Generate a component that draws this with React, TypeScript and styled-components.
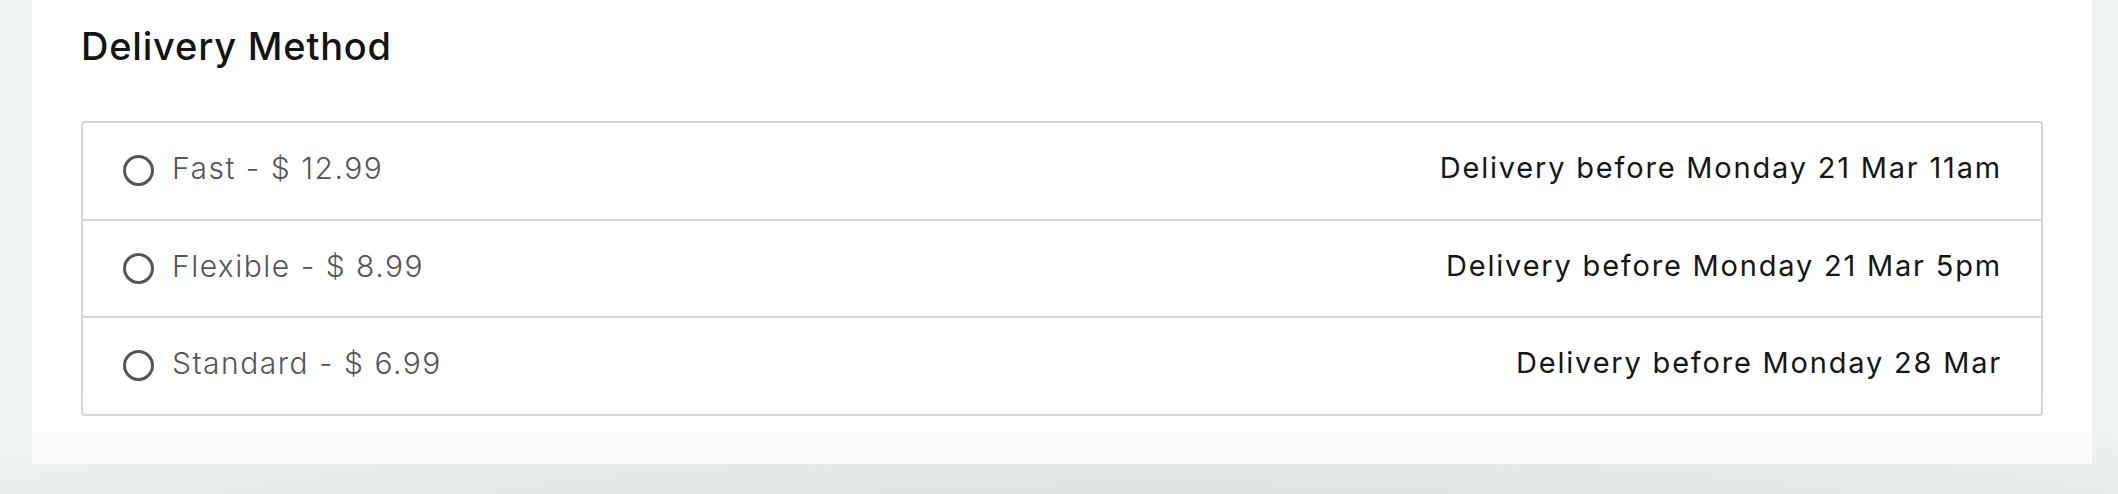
import React from "react";
import styled, { createGlobalStyle } from "styled-components";

const GlobalStyle = createGlobalStyle`
  html, body {
    margin: 0;
    padding: 0;
  }
  body {
    background: #eef2f3;
    font-family: "Inter", "Liberation Sans", sans-serif;
    min-height: 494px;
    overflow: hidden;
  }
`;

const Page = styled.div`
  width: 2118px;
  height: 494px;
  padding: 0 26px 0 32px;
  box-sizing: border-box;
  background: radial-gradient(ellipse 1400px 120px at 55% 520px, #d9dcdd 0%, #e5e8e9 50%, #eef2f3 100%);
`;

const Card = styled.section`
  background: linear-gradient(to bottom, #ffffff 82%, #fbfbfb 100%);
  border-radius: 0 0 4px 4px;
  padding: 26px 49px 48px 49px;
  box-sizing: border-box;
`;

const Heading = styled.h2`
  margin: 0 0 55px 0;
  font-family: "Inter", "Liberation Sans", sans-serif;
  font-weight: 500;
  font-size: 38px;
  letter-spacing: 0.8px;
  line-height: 40px;
  color: #141414;
`;

const OptionList = styled.div`
  border: 2px solid #d6d6d6;
  border-radius: 4px;
  display: flex;
  flex-direction: column;
`;

const OptionRow = styled.label`
  display: flex;
  align-items: center;
  justify-content: space-between;
  height: 95.7px;
  padding: 0 39px 0 40px;
  box-sizing: border-box;
  cursor: pointer;
  & + & {
    border-top: 2px solid #d6d6d6;
    height: 97.7px;
  }
`;

const Left = styled.span`
  display: flex;
  align-items: center;
  gap: 18px;
`;

const RadioCircle = styled.span`
  width: 31px;
  height: 31px;
  box-sizing: border-box;
  border: 3px solid #555555;
  border-radius: 50%;
  flex: none;
  margin-top: -1px;
`;

const Label = styled.span`
  font-size: 30px;
  font-weight: 300;
  letter-spacing: 1.5px;
  line-height: 36px;
  color: #555555;
  padding-bottom: 6px;
`;

const Eta = styled.span`
  font-size: 29px;
  font-weight: 400;
  letter-spacing: 1.8px;
  line-height: 36px;
  color: #161616;
  padding-bottom: 6px;
`;

const options = [
  { name: "Fast", price: "12.99", eta: "Delivery before Monday 21 Mar 11am" },
  { name: "Flexible", price: "8.99", eta: "Delivery before Monday 21 Mar 5pm" },
  { name: "Standard", price: "6.99", eta: "Delivery before Monday 28 Mar" },
];

export default function App() {
  return (
    <>
      <GlobalStyle />
      <Page>
        <Card>
          <Heading>Delivery Method</Heading>
          <OptionList>
            {options.map((o) => (
              <OptionRow key={o.name}>
                <Left>
                  <RadioCircle />
                  <Label>
                    {o.name} - $ {o.price}
                  </Label>
                </Left>
                <Eta>{o.eta}</Eta>
              </OptionRow>
            ))}
          </OptionList>
        </Card>
      </Page>
    </>
  );
}
